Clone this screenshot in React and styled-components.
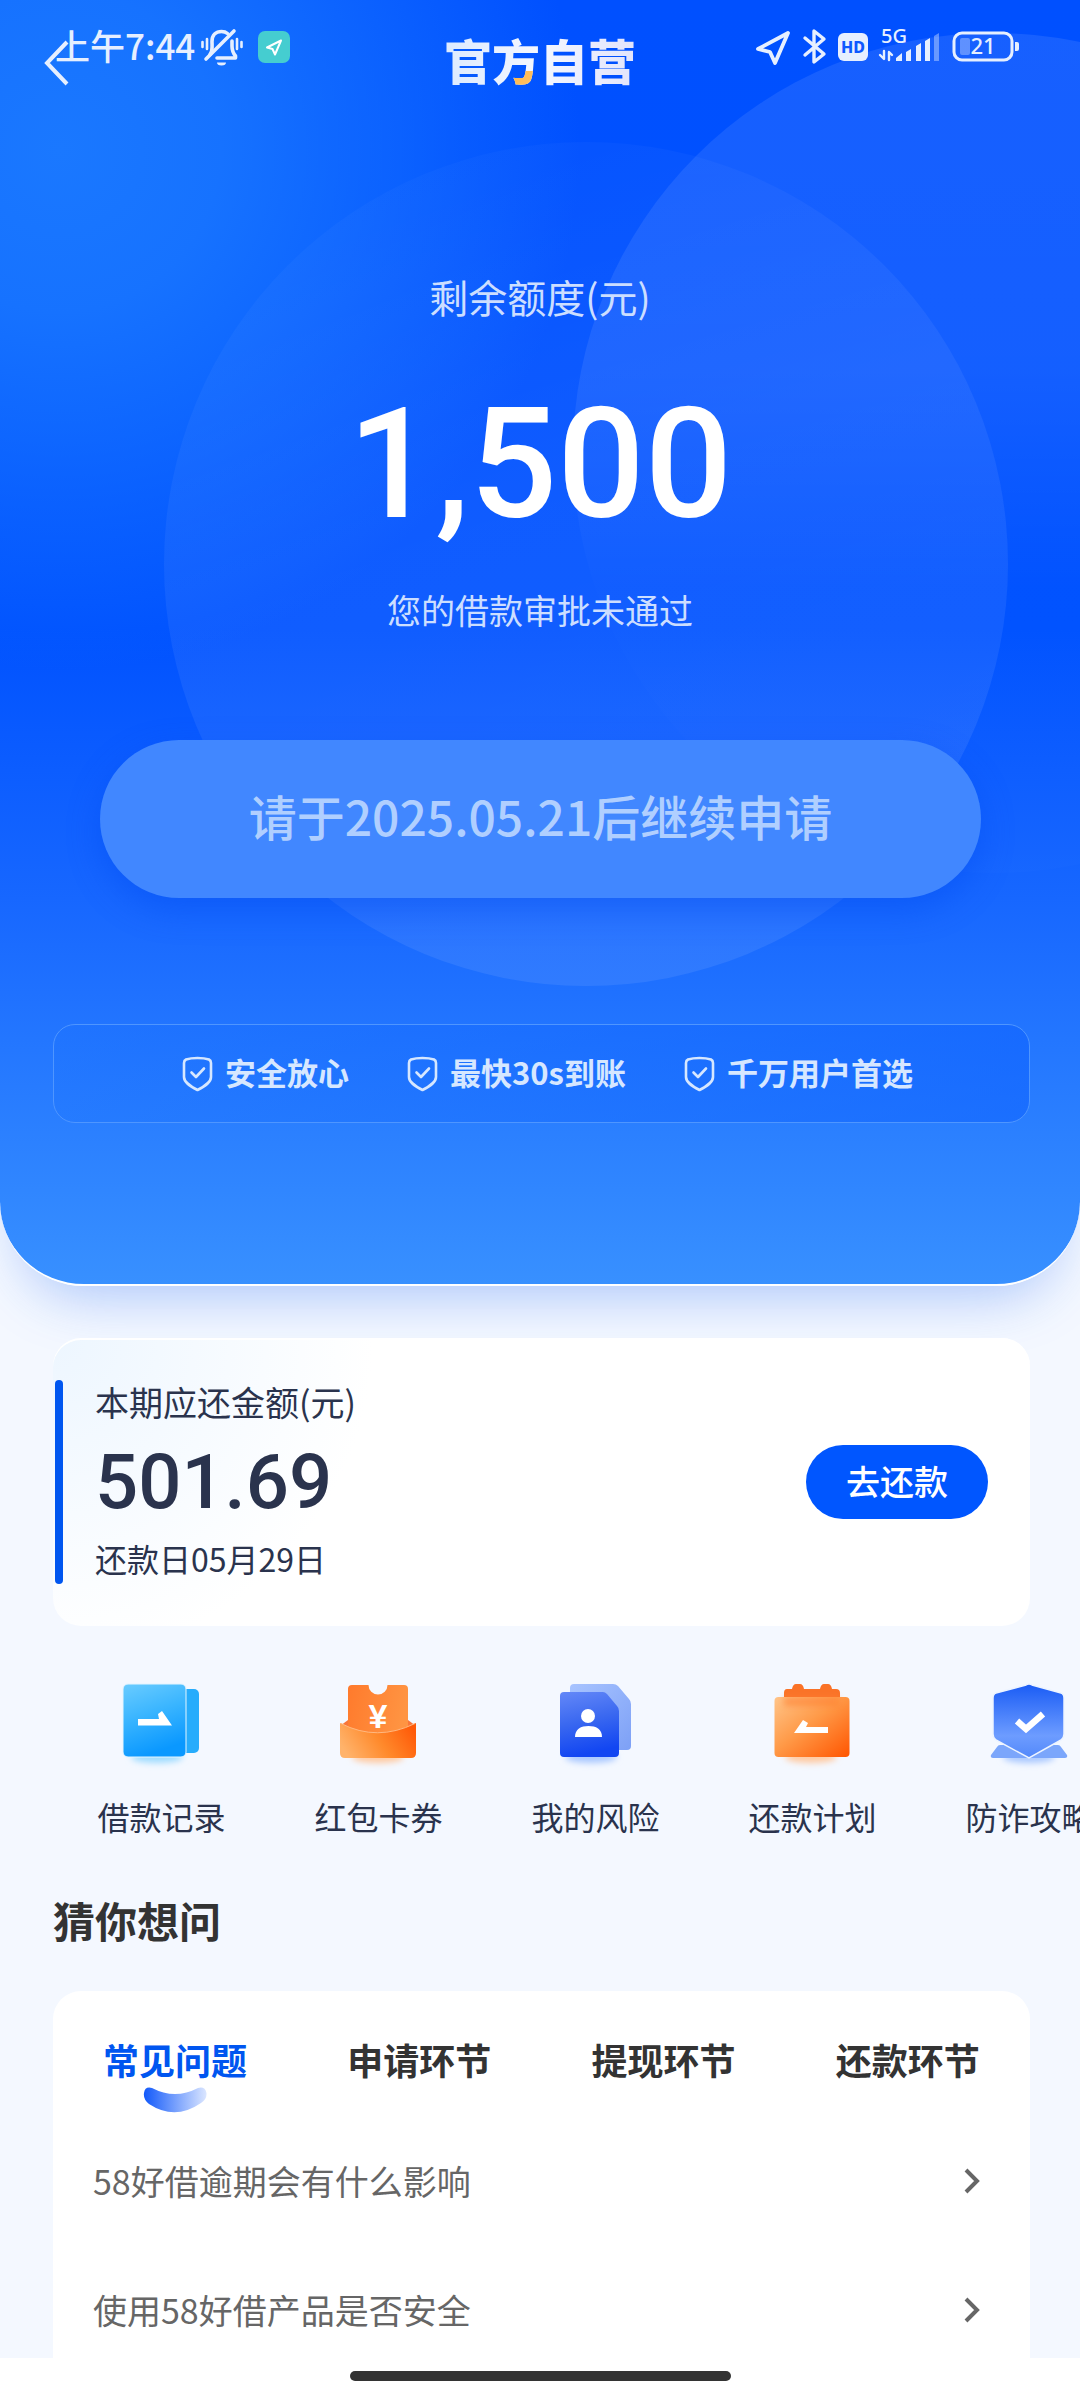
import React, { useState } from "react";
import styled, { createGlobalStyle } from "styled-components";

const GlobalStyle = createGlobalStyle`
  * {
    box-sizing: border-box;
  }
  body {
    margin: 0;
    background: #f4f8ff;
    font-family: "Noto Sans CJK SC", "Noto Sans", sans-serif;
  }
  button {
    border: none;
    padding: 0;
    background: none;
    font-family: inherit;
    color: inherit;
    cursor: pointer;
  }
`;

const Page = styled.div`
  min-height: 100vh;
  overflow: hidden;
`;

const Hero = styled.section`
  position: relative;
  display: flex;
  flex-direction: column;
  align-items: stretch;
  padding-bottom: 161px;
  border-bottom: 2px solid #fff;
  border-radius: 0 0 84px 84px;
  overflow: hidden;
  text-align: center;
  background: radial-gradient(
      circle at 60px 150px,
      #1a78ff 0,
      rgba(26, 120, 255, 0.85) 160px,
      rgba(26, 120, 255, 0) 520px
    ),
    linear-gradient(180deg, #0050ff 0%, #0052ff 49%, #1767ff 70%, #3890ff 100%);
`;

const HeroShadow = styled.div`
  border-radius: 0 0 84px 84px;
  box-shadow: 0 32px 56px -24px rgba(30, 100, 240, 0.36);
`;

const Circles = styled.svg`
  position: absolute;
  top: 0;
  left: 0;
  width: 100%;
  height: 1000px;
`;

const StatusBar = styled.div`
  position: absolute;
  z-index: 2;
  top: 0;
  left: 0;
  right: 0;
  height: 94px;
  padding: 0 60px 0 55px;
  display: flex;
  justify-content: space-between;
  align-items: center;
  color: #e6efff;
`;

const StatusGroup = styled.div`
  display: flex;
  align-items: center;
  gap: ${(props) => props.$gap}px;
`;

const Time = styled.span`
  padding-bottom: 4px;
  font-size: 35px;
  line-height: 44px;
  font-weight: 500;
`;

const Nav = styled.header`
  position: relative;
  height: 126px;
  padding: 0 40px;
  display: grid;
  grid-template-columns: 1fr auto 1fr;
  align-items: center;
`;

const BackButton = styled.button`
  justify-self: start;
  display: flex;
`;

const Title = styled.h1`
  margin: 0;
  padding-bottom: 8px;
  font-size: 48px;
  line-height: 60px;
  font-weight: 900;
  color: transparent;
  background: linear-gradient(135deg, #ffb84d, #ffc46b) 70px 42px / 26px 18px
      no-repeat,
    linear-gradient(90deg, #dceaff, #f4f7ff 50%, #e2e4fb);
  background-clip: text;
  -webkit-background-clip: text;
`;

const QuotaLabel = styled.div`
  position: relative;
  margin-top: 142px;
  font-size: 39px;
  line-height: 56px;
  color: #ccdeff;
`;

const Quota = styled.div`
  position: relative;
  margin-top: 61px;
  font-family: Roboto, "Liberation Sans", sans-serif;
  font-size: 154px;
  line-height: 160px;
  font-weight: 500;
  color: #fff;
`;

const QuotaNote = styled.div`
  position: relative;
  margin-top: 41px;
  font-size: 34px;
  line-height: 48px;
  color: #ccdeff;
`;

const ApplyButton = styled.button`
  position: relative;
  margin: 106px 99px 0 100px;
  padding-bottom: 8px;
  height: 158px;
  border-radius: 79px;
  background: #4187ff;
  box-shadow: 0 12px 32px rgba(0, 76, 240, 0.45);
  font-size: 48px;
  font-weight: 500;
  color: #b0cfff;
`;

const Features = styled.ul`
  position: relative;
  margin: 126px 50px 0 53px;
  padding: 0 0 0 12px;
  height: 99px;
  list-style: none;
  display: flex;
  justify-content: center;
  align-items: center;
  gap: 58px;
  border: 1px solid #4f96ff;
  border-radius: 22px;
  background: linear-gradient(90deg, rgba(20, 110, 255, 0.2), rgba(14, 98, 255, 0.55));
`;

const Feature = styled.li`
  display: flex;
  align-items: center;
  gap: 12px;
  font-size: 31px;
  line-height: 44px;
  font-weight: 700;
  color: #d6e7ff;
`;

const FeatureText = styled.span`
  padding-bottom: 4px;
`;

const Main = styled.main`
  padding: 52px 50px 0 53px;
`;

const BillCard = styled.section`
  position: relative;
  display: flex;
  align-items: center;
  padding: 42px 42px 42px 2px;
  border-radius: 28px;
  background: radial-gradient(circle at 0 0, #edf6ff 0, #fff 320px);
  box-shadow: inset 0 2px 0 #fff;
  color: #2a334d;
`;

const Accent = styled.span`
  align-self: stretch;
  width: 8px;
  border-radius: 4px;
  background: #0056f0;
`;

const BillInfo = styled.div`
  flex: 1;
  padding: 0 0 4px 32px;
`;

const BillLabel = styled.div`
  font-size: 34px;
  line-height: 44px;
`;

const BillAmount = styled.div`
  margin: 18px 0 14px;
  font-family: Roboto, "Liberation Sans", sans-serif;
  font-size: 76px;
  line-height: 80px;
  font-weight: 500;
`;

const BillDate = styled.div`
  font-size: 32px;
  line-height: 44px;
`;

const RepayButton = styled.button`
  width: 182px;
  height: 74px;
  padding-bottom: 4px;
  border-radius: 37px;
  background: #0056ff;
  font-size: 34px;
  font-weight: 500;
  color: #fff;
`;

const QuickList = styled.nav`
  display: flex;
  margin: 52px -50px 0 0;
  overflow: hidden;
`;

const QuickItem = styled.a`
  flex: none;
  width: 217px;
  display: flex;
  flex-direction: column;
  align-items: center;
  gap: 20px;
  font-size: 32px;
  line-height: 44px;
  color: #2a334d;
  text-decoration: none;
`;

const QuickIcon = styled.svg`
  width: 96px;
  height: 96px;
`;

const Yen = styled.text`
  font-family: "Liberation Sans", sans-serif;
  font-size: 34px;
  font-weight: 700;
  fill: #fff;
  text-anchor: middle;
`;

const Heading = styled.h2`
  margin: 52px 0 41px;
  font-size: 42px;
  line-height: 60px;
  font-weight: 700;
  color: #333;
`;

const FaqCard = styled.section`
  border-radius: 28px 28px 0 0;
  background: #fff;
`;

const Tabs = styled.div`
  display: grid;
  grid-template-columns: repeat(4, 1fr);
  padding-top: 42px;
`;

const Tab = styled.button`
  display: flex;
  flex-direction: column;
  align-items: center;
  gap: 2px;
  height: 83px;
  font-size: 36px;
  line-height: 52px;
  font-weight: 700;
  color: ${(props) => (props.$active ? "#0056f0" : "#333")};
`;

const Smile = styled.svg`
  width: 64px;
  height: 26px;
`;

const Question = styled.a`
  display: flex;
  justify-content: space-between;
  align-items: center;
  height: 129px;
  padding: 0 48px 0 40px;
  font-size: 34px;
  color: #666;
  text-decoration: none;
`;

const HomeBar = styled.div`
  position: fixed;
  left: 0;
  right: 0;
  bottom: 0;
  height: 42px;
  padding-top: 13px;
  background: #fff;
  &::before {
    content: "";
    display: block;
    width: 381px;
    height: 10px;
    margin: 0 auto;
    border-radius: 5px;
    background: #333;
  }
`;

const StatusText = styled.text`
  font-family: "Noto Sans", sans-serif;
  font-size: ${(props) => props.$size}px;
  font-weight: ${(props) => props.$weight || 500};
  text-anchor: middle;
`;

const BellOff = () => (
  <svg width="42" height="38" viewBox="0 0 42 38" fill="none" stroke="#e6efff" strokeWidth="3.600" strokeLinecap="round">
    <path d="M9 26.500C12 23 11 18 11 13.500C11 7 15 3.500 20.500 3.500C23 3.500 25 4.200 26.500 5.500" />
    <path d="M31 13V18C31 22 32 25 34.500 28V30H16" strokeLinejoin="round" />
    <path d="M5 31L33 3" />
    <path d="M16 34.500H25A4.500 3 0 0 1 16 34.500Z" fill="#e6efff" stroke="none" />
    <path d="M1.500 14V19M6 11V21M36 11V21M40.500 14V19" strokeWidth="2.600" />
  </svg>
);

const NavBadge = () => (
  <svg width="32" height="32" viewBox="0 0 32 32">
    <rect width="32" height="32" rx="7" fill="#45cdd0" />
    <path d="M23 9.500L9 16.500L14.500 18L17 23.500Z" fill="none" stroke="#fff" strokeWidth="2" strokeLinejoin="round" />
  </svg>
);

const StatusIcons = () => (
  <svg width="265" height="60" viewBox="755 17 265 60" fill="none" stroke="#e6efff" strokeLinejoin="round" strokeLinecap="round">
    <path d="M788 33L758 49L770 52L775 63Z" strokeWidth="3.800" />
    <path d="M805 38L824 54L814 62V31L824 39L805 55" strokeWidth="3.400" />
    <rect x="838" y="33" width="30" height="28" rx="6" fill="#e6efff" stroke="none" />
    <StatusText x="853" y="53" $size={16} $weight={800} fill="#0d58ff" stroke="none">HD</StatusText>
    <StatusText x="894" y="43" $size={20} fill="#e6efff" stroke="none">5G</StatusText>
    <path d="M880 55L884 59V51M889 60V52L892 55" strokeWidth="2.400" />
    <g fill="#e6efff" stroke="none">
      <path d="M896 58L902 53V61H896ZM906 52L911 49V61H906ZM916 46L921 43V61H916ZM925 41L930 38V61H925Z" />
      <path d="M934 36L939 33V61H934Z" opacity="0.400" />
      <rect x="960" y="38" width="10" height="17" rx="2" opacity="0.350" />
      <path d="M1015 42H1017Q1019 42 1019 44V49Q1019 51 1017 51H1015Z" />
    </g>
    <rect x="954" y="33" width="58" height="27" rx="8" strokeWidth="3" />
    <StatusText x="983" y="54" $size={22} fill="#e6efff" stroke="none">21</StatusText>
  </svg>
);

const ShieldIcon = () => (
  <svg width="31" height="36" viewBox="0 0 31 36" fill="none" stroke="#d6e7ff" strokeWidth="2.600" strokeLinejoin="round" strokeLinecap="round">
    <path d="M15.500 2C19 2 24 2.500 27 3.500Q29 4.500 29 7V21C29 26 24 29.500 15.500 34C7 29.500 2 26 2 21V7Q2 4.500 4 3.500C7 2.500 12 2 15.500 2Z" />
    <path d="M9.500 16.500L14 21L22 12.500" />
  </svg>
);

const ChevronRight = () => (
  <svg width="18" height="26" viewBox="0 0 18 26" fill="none" stroke="#666" strokeWidth="4">
    <path d="M2 2L13 13L2 24" />
  </svg>
);

const GlowDefs = () => (
  <svg width="0" height="0" style={{ position: "absolute" }} aria-hidden="true">
    <defs>
      <filter id="soft" x="-50%" y="-100%" width="200%" height="300%">
        <feGaussianBlur stdDeviation="3" />
      </filter>
      <linearGradient id="sky" x1="0" y1="0" x2="0.3" y2="1">
        <stop offset="0" stopColor="#6accff" />
        <stop offset="0.5" stopColor="#38b4ff" />
        <stop offset="1" stopColor="#0a98ff" />
      </linearGradient>
      <linearGradient id="orange" x1="0" y1="0" x2="1" y2="1">
        <stop offset="0" stopColor="#ffc58a" />
        <stop offset="0.450" stopColor="#ff9a48" />
        <stop offset="1" stopColor="#ff5500" />
      </linearGradient>
      <linearGradient id="pocket" x1="0" y1="0.6" x2="1" y2="0.3">
        <stop offset="0" stopColor="#ffb36b" />
        <stop offset="0.500" stopColor="#ff8a2c" />
        <stop offset="1" stopColor="#ff5a08" />
      </linearGradient>
      <linearGradient id="ticket" x1="0" y1="0" x2="1" y2="0.2">
        <stop offset="0" stopColor="#ff7a2c" />
        <stop offset="1" stopColor="#ff9442" />
      </linearGradient>
      <linearGradient id="navy" x1="0" y1="0" x2="0.2" y2="1">
        <stop offset="0" stopColor="#6488f8" />
        <stop offset="0.500" stopColor="#3a68f0" />
        <stop offset="1" stopColor="#1246f2" />
      </linearGradient>
      <linearGradient id="pale" x1="0" y1="0" x2="1" y2="1">
        <stop offset="0" stopColor="#a8c4ff" />
        <stop offset="1" stopColor="#7da0f6" />
      </linearGradient>
      <linearGradient id="shield" x1="0" y1="0" x2="0" y2="1">
        <stop offset="0" stopColor="#1a5cf5" />
        <stop offset="0.700" stopColor="#6d9cff" />
        <stop offset="1" stopColor="#5288fa" />
      </linearGradient>
    </defs>
  </svg>
);

const RecordIcon = () => (
  <QuickIcon viewBox="1 0 96 96">
    <ellipse cx="44" cy="79" rx="26" ry="6" fill="#9fdcff" filter="url(#soft)" />
    <rect x="62" y="11" width="24" height="64" rx="5" fill="#27acfc" />
    <rect x="10" y="6" width="63" height="73" rx="5" fill="url(#sky)" stroke="#e4f5ff" strokeWidth="1" />
    <path d="M25 41H46L45 36L49 33L59 47.500H25Z" fill="#fff" />
  </QuickIcon>
);

const CouponIcon = () => (
  <QuickIcon viewBox="1 0 96 96">
    <ellipse cx="48" cy="79" rx="26" ry="6" fill="#ffc9a0" filter="url(#soft)" />
    <path d="M10 48L18 42H78L86 48V62H10Z" fill="#f8763a" />
    <path d="M22 7H38.500A9.500 9.500 0 0 0 57.500 7H74Q78 7 78 11V60H18V11Q18 7 22 7Z" fill="url(#ticket)" />
    <Yen x="48" y="50">¥</Yen>
    <path d="M10 45Q46 64 86 45V75Q86 80 81 80H15Q10 80 10 75Z" fill="url(#pocket)" />
    <path d="M11 45.500Q47 64 85 45.500" fill="none" stroke="#ffb880" strokeWidth="1" />
  </QuickIcon>
);

const RiskIcon = () => (
  <QuickIcon viewBox="1 0 96 96">
    <ellipse cx="44" cy="79" rx="26" ry="6" fill="#a9c8ff" filter="url(#soft)" />
    <path d="M27 6H66Q69 6 71 8L82 21Q84 23 84 26V68Q84 72 80 72H27Q23 72 23 68V10Q23 6 27 6Z" fill="url(#pale)" />
    <path d="M17 14H56Q58 14 60 16L70 28Q72 30 72 33V75Q72 79 68 79H17Q13 79 13 75V18Q13 14 17 14Z" fill="url(#navy)" />
    <circle cx="41" cy="38" r="7" fill="#fff" />
    <path d="M28 59C28 51 34 48 41.500 48S55 51 55 59Z" fill="#fff" />
  </QuickIcon>
);

const PlanIcon = () => (
  <QuickIcon viewBox="2 0 96 96">
    <ellipse cx="48" cy="79" rx="26" ry="6" fill="#ffc9a0" filter="url(#soft)" />
    <path d="M24 11H29Q30 6 33 6H37Q40 6 41 11H57Q58 6 61 6H65Q68 6 69 11H73Q77 11 77 15V26H21V15Q21 11 24 11Z" fill="#fa7328" />
    <rect x="11.500" y="19" width="75" height="60" rx="4" fill="url(#orange)" />
    <rect x="21" y="19" width="55" height="9" fill="#ff8030" opacity="0.600" filter="url(#soft)" />
    <path d="M31 55L40 42L45 45L43 49H65V55Z" fill="#fff" />
  </QuickIcon>
);

const GuardIcon = () => (
  <QuickIcon viewBox="2 0 96 96">
    <ellipse cx="49" cy="79" rx="26" ry="6" fill="#a9c8ff" filter="url(#soft)" />
    <path d="M20 67H78Q80 67 81 69L87 77Q88 80 85 80H13Q10 80 11 77L17 69Q18 67 20 67Z" fill="#7ba6fb" />
    <path d="M46 7Q49 5 52 7L81 15Q84 16 84 20V56Q84 60 81 62L49 80L16 62Q13 60 13 56V20Q13 16 16 15Z" fill="url(#shield)" stroke="#edf4ff" strokeWidth="1.500" />
    <path d="M37 43L46 51L63 36" fill="none" stroke="#fff" strokeWidth="6.500" />
  </QuickIcon>
);

const features = ["安全放心", "最快30s到账", "千万用户首选"];

const quickItems = [
  { label: "借款记录", Icon: RecordIcon },
  { label: "红包卡券", Icon: CouponIcon },
  { label: "我的风险", Icon: RiskIcon },
  { label: "还款计划", Icon: PlanIcon },
  { label: "防诈攻略", Icon: GuardIcon },
];

const tabs = ["常见问题", "申请环节", "提现环节", "还款环节"];

const questions = ["58好借逾期会有什么影响", "使用58好借产品是否安全"];

const App = () => {
  const [active, setActive] = useState(0);

  return (
    <Page>
      <GlobalStyle />
      <GlowDefs />
      <HeroShadow>
        <Hero>
          <Circles viewBox="0 0 1080 1000" preserveAspectRatio="xMidYMin slice" aria-hidden="true">
            <defs>
              <linearGradient id="ringMain" x1="0" y1="0" x2="0.3" y2="1">
                <stop offset="0" stopColor="#fff" stopOpacity="0.010" />
                <stop offset="0.500" stopColor="#fff" stopOpacity="0.060" />
                <stop offset="1" stopColor="#fff" stopOpacity="0.080" />
              </linearGradient>
              <linearGradient id="ringSide" x1="0" y1="0" x2="0" y2="1">
                <stop offset="0" stopColor="#fff" stopOpacity="0.090" />
                <stop offset="0.400" stopColor="#fff" stopOpacity="0.080" />
                <stop offset="0.660" stopColor="#fff" stopOpacity="0.005" />
                <stop offset="1" stopColor="#fff" stopOpacity="0.010" />
              </linearGradient>
            </defs>
            <circle cx="586" cy="564" r="422" fill="url(#ringMain)" />
            <circle cx="993" cy="453" r="420" fill="url(#ringSide)" />
          </Circles>
          <StatusBar>
            <StatusGroup $gap={15}>
              <StatusGroup $gap={6}>
                <Time>上午7:44</Time>
                <BellOff />
              </StatusGroup>
              <NavBadge />
            </StatusGroup>
            <StatusIcons />
          </StatusBar>
          <Nav>
            <BackButton aria-label="返回">
              <svg width="32" height="50" viewBox="0 0 32 50" fill="none" stroke="#e6efff" strokeWidth="4">
                <path d="M27 4L7 25L27 46" />
              </svg>
            </BackButton>
            <Title>官方自营</Title>
          </Nav>
          <QuotaLabel>剩余额度(元)</QuotaLabel>
          <Quota>1,500</Quota>
          <QuotaNote>您的借款审批未通过</QuotaNote>
          <ApplyButton>请于2025.05.21后继续申请</ApplyButton>
          <Features>
            {features.map((text) => (
              <Feature key={text}>
                <ShieldIcon />
                <FeatureText>{text}</FeatureText>
              </Feature>
            ))}
          </Features>
        </Hero>
      </HeroShadow>
      <Main>
        <BillCard>
          <Accent />
          <BillInfo>
            <BillLabel>本期应还金额(元)</BillLabel>
            <BillAmount>501.69</BillAmount>
            <BillDate>还款日05月29日</BillDate>
          </BillInfo>
          <RepayButton>去还款</RepayButton>
        </BillCard>
        <QuickList>
          {quickItems.map(({ label, Icon }) => (
            <QuickItem href="#" key={label}>
              <Icon />
              {label}
            </QuickItem>
          ))}
        </QuickList>
        <Heading>猜你想问</Heading>
        <FaqCard>
          <Tabs role="tablist">
            {tabs.map((name, i) => (
              <Tab key={name} role="tab" aria-selected={i === active} $active={i === active} onClick={() => setActive(i)}>
                {name}
                {i === active && (
                  <Smile viewBox="0 0 64 26">
                    <defs>
                      <linearGradient id="smile">
                        <stop offset="0" stopColor="#1259fa" />
                        <stop offset="1" stopColor="#dbe6ff" />
                      </linearGradient>
                    </defs>
                    <path d="M9 1Q32 13 55 1Q62 -1 63.500 6Q64 12 58 16Q32 34 6 17Q0 12 1 6Q2 -1 9 1Z" fill="url(#smile)" />
                  </Smile>
                )}
              </Tab>
            ))}
          </Tabs>
          {questions.map((text) => (
            <Question href="#" key={text}>
              {text}
              <ChevronRight />
            </Question>
          ))}
        </FaqCard>
      </Main>
      <HomeBar />
    </Page>
  );
};

export default App;
